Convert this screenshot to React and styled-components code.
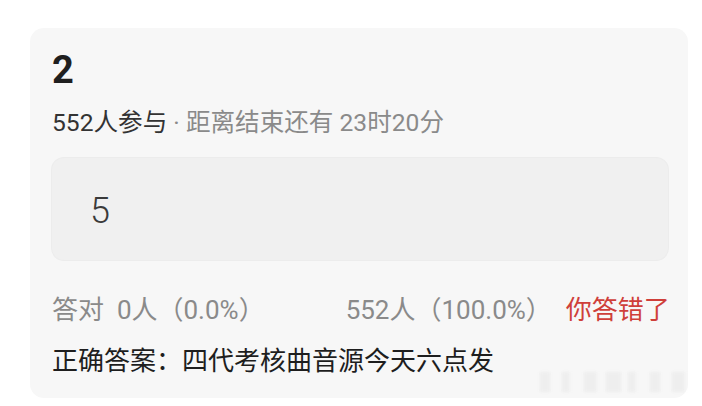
import React from 'react';
import styled, { createGlobalStyle } from 'styled-components';

const GlobalStyle = createGlobalStyle`
  html, body {
    margin: 0;
    padding: 0;
    background: #ffffff;
  }
  body {
    font-family: Roboto, "Noto Sans CJK SC", sans-serif;
  }
`;

const Page = styled.div`
  width: 702px;
  height: 406px;
  box-sizing: border-box;
  padding: 28px 14px 0 30px;
  position: relative;
  overflow: hidden;
`;

const Card = styled.div`
  background: #f7f7f7;
  border-radius: 14px;
  height: 370px;
  box-sizing: border-box;
  padding: 20px 20px 0 22px;
`;

const Title = styled.div`
  font-size: 38px;
  font-weight: 700;
  line-height: 44px;
  color: #1f1f1f;
`;

const Meta = styled.div`
  margin-top: 15px;
  font-size: 24.6px;
  line-height: 32px;
  color: #8a8a8a;
  white-space: nowrap;

  strong {
    font-weight: 400;
    color: #333333;
  }
`;

const AnswerBox = styled.div`
  margin-top: 19px;
  height: 102px;
  background: #f0f0f0;
  border-radius: 12px;
  box-shadow: 0 0 0 1px #ececec;
  display: flex;
  align-items: center;
  padding-left: 38px;
  padding-top: 3px;
  box-sizing: border-box;
  font-size: 36px;
  font-weight: 300;
  color: #3a3a3a;
`;

const Stats = styled.div`
  margin-top: 33px;
  display: flex;
  align-items: center;
  font-size: 26px;
  line-height: 34px;
  color: #8a8a8a;
  white-space: nowrap;
`;

const StatGroup = styled.span`
  margin-left: ${p => p.$offset || 0}px;
  color: ${p => (p.$wrong ? '#cf3f3a' : 'inherit')};
`;

const Correct = styled.div`
  margin-top: 17px;
  font-size: 26px;
  line-height: 34px;
  color: #1e1e1e;
  white-space: nowrap;
`;

// faint site stamp in the lower right corner
const Stamp = styled.div`
  position: absolute;
  right: 8px;
  bottom: 10px;
  font-size: 20px;
  letter-spacing: 2px;
  color: rgba(220, 220, 220, 0.3);
  filter: blur(1.5px);
`;

export default function App() {
  return (
    <>
      <GlobalStyle />
      <Page>
        <Card>
          <Title>2</Title>
          <Meta>
            <strong>552人参与</strong> · 距离结束还有 23时20分
          </Meta>
          <AnswerBox>5</AnswerBox>
          <Stats>
            <StatGroup>答对&nbsp;&nbsp;0人（0.0%）</StatGroup>
            <StatGroup $offset={81}>552人（100.0%）</StatGroup>
            <StatGroup $offset={14} $wrong>你答错了</StatGroup>
          </Stats>
          <Correct>正确答案：四代考核曲音源今天六点发</Correct>
        </Card>
        <Stamp>▌▍▋▊▍▌▋</Stamp>
      </Page>
    </>
  );
}
